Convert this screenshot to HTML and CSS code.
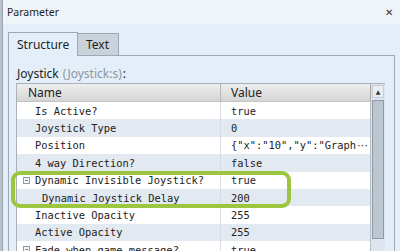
FILE: index.html
```
<!DOCTYPE html>
<html lang="en">
<head>
    <meta charset="UTF-8">
    <title>Parameter</title>
    <link rel="stylesheet" href="styles.css">
</head>
<body>
    <div class="edge"></div>
    <div class="window">
        <div class="titlebar">
            <span class="title">Parameter</span>
            <span class="close">&#x2715;</span>
        </div>
        <div class="content">
            <div class="tabs">
                <div class="tab active">Structure</div>
                <div class="tab">Text</div>
            </div>
            <div class="panel">
                <div class="label">Joystick <span class="type">(Joystick:s)</span>:</div>
                <div class="grid">
                    <div class="table">
                        <div class="row header">
                            <div class="cell name">Name</div>
                            <div class="cell value">Value</div>
                        </div>
                        <div class="row">
                            <div class="cell name"><span class="slot"></span>Is Active?</div>
                            <div class="cell value">true</div>
                        </div>
                        <div class="row alt">
                            <div class="cell name"><span class="slot"></span>Joystick Type</div>
                            <div class="cell value">0</div>
                        </div>
                        <div class="row">
                            <div class="cell name"><span class="slot"></span>Position</div>
                            <div class="cell value">{"x":"10","y":"Graph<span class="more">&#x22ef;</span></div>
                        </div>
                        <div class="row alt">
                            <div class="cell name"><span class="slot"></span>4 way Direction?</div>
                            <div class="cell value">false</div>
                        </div>
                        <div class="row">
                            <div class="cell name"><span class="slot"><span class="toggle"></span></span>Dynamic Invisible Joystick?</div>
                            <div class="cell value">true</div>
                        </div>
                        <div class="row alt">
                            <div class="cell name child"><span class="slot"></span>Dynamic Joystick Delay</div>
                            <div class="cell value">200</div>
                        </div>
                        <div class="row">
                            <div class="cell name"><span class="slot"></span>Inactive Opacity</div>
                            <div class="cell value">255</div>
                        </div>
                        <div class="row alt">
                            <div class="cell name"><span class="slot"></span>Active Opacity</div>
                            <div class="cell value">255</div>
                        </div>
                        <div class="row">
                            <div class="cell name"><span class="slot"><span class="toggle"></span></span>Fade when game message?</div>
                            <div class="cell value">true</div>
                        </div>
                    </div>
                    <div class="scrollbar">
                        <div class="scroll-up">&#x25b2;</div>
                        <div class="thumb"></div>
                    </div>
                    <!-- highlight around the dynamic joystick rows -->
                    <div class="highlight"></div>
                </div>
            </div>
        </div>
    </div>
</body>
</html>
```

FILE: styles.css
```
* {
    box-sizing: border-box;
}
body {
    margin: 0;
    width: 400px;
    height: 251px;
    overflow: hidden;
    display: flex;
    background-color: #e3eef9;
    font-family: "Noto Sans", sans-serif;
    color: #1e1e1e;
}
.edge {
    width: 3px;
    background-color: #b9c2cc;
    border-right: 1px solid #98a4b0;
    flex: none;
}
.window {
    flex: 1;
    display: flex;
    flex-direction: column;
}
.titlebar {
    height: 24px;
    flex: none;
    display: flex;
    align-items: center;
    justify-content: space-between;
    padding: 0 7px 0 4px;
    background-color: #eef4f8;
}
.title {
    font-size: 10.5px;
}
.close {
    font-size: 10px;
    color: #333;
}
.content {
    flex: 1;
    padding: 8px 5px 0 5px;
}
.tabs {
    display: flex;
    align-items: flex-end;
    height: 23px;
}
.tab {
    height: 22px;
    padding: 0 8px;
    display: flex;
    align-items: center;
    font-size: 12px;
    background-color: #c9d1da;
    border: 1px solid #9ea8b2;
    border-bottom: none;
}
.tab.active {
    height: 24px;
    background-color: #e3eef9;
    margin-bottom: -1px;
    position: relative;
    width: 70px;
}
.tab:not(.active) {
    width: 41px;
    border-left: none;
}
.panel {
    border: 1px solid #9ea8b2;
    border-bottom: none;
    height: 200px;
    padding: 0 7px 0 7px;
}
.label {
    font-size: 12px;
    height: 27px;
    display: flex;
    align-items: center;
    padding-top: 8px;
    padding-left: 1px;
}
.label .type {
    color: #8a96a2;
    margin: 0 1px 0 4px;
}
.grid {
    position: relative;
    display: flex;
    width: 369px;
    height: 180px;
    border: 1px solid #a9b1ba;
    border-bottom: none;
    background-color: #ffffff;
    font-family: "DejaVu Sans Mono", monospace;
    font-size: 10.4px;
    color: #222;
}
.table {
    width: 354px;
    flex: none;
}
.row {
    display: flex;
    height: 17.4px;
    background-color: #ffffff;
}
.row.alt {
    background-color: #e3e9f0;
}
.row.header {
    height: 18px;
    background: linear-gradient(#eeeeee, #d5d5d5);
    border-bottom: 1px solid #c2c2c2;
    font-family: "Noto Sans", sans-serif;
    font-size: 12px;
}
.cell {
    display: flex;
    align-items: center;
    white-space: nowrap;
    overflow: hidden;
}
.cell.name {
    width: 204px;
    padding-left: 6px;
    border-right: 1px solid #d8dde3;
}
.header .cell.name {
    padding-left: 11px;
    border-right-color: #b6b6b6;
}
.cell.name.child {
    padding-left: 13px;
}
.cell.value {
    width: 150px;
    padding-left: 10px;
    border-right: 1px solid #b8bfc7;
}
.header .cell.value {
    border-right-color: #a5a5a5;
}
.more {
    font-family: "DejaVu Sans", sans-serif;
    margin-left: 1px;
}
.slot {
    width: 12px;
    flex: none;
    display: flex;
    align-items: center;
}
.toggle {
    width: 7px;
    height: 7px;
    border: 1px solid #8f9cab;
    background: linear-gradient(#7d8896, #7d8896) center / 3px 1px no-repeat, #f4f6f8;
}
.scrollbar {
    width: 14px;
    flex: none;
    background-color: #dde6f0;
    padding: 1px 1px 0 1px;
}
.scroll-up {
    height: 13px;
    background-color: #e9edf1;
    border: 1px solid #c4ccd4;
    font-size: 6px;
    color: #333;
    display: flex;
    align-items: center;
    justify-content: center;
    font-family: "DejaVu Sans", sans-serif;
}
.thumb {
    margin-top: 2px;
    height: 139px;
    background-color: #bcc6d1;
    border: 1px solid #8e99a6;
}
.highlight {
    position: absolute;
    left: -6px;
    top: 87px;
    width: 280px;
    height: 37px;
    border: 4px solid #9cc63f;
    border-radius: 9px;
}
```
